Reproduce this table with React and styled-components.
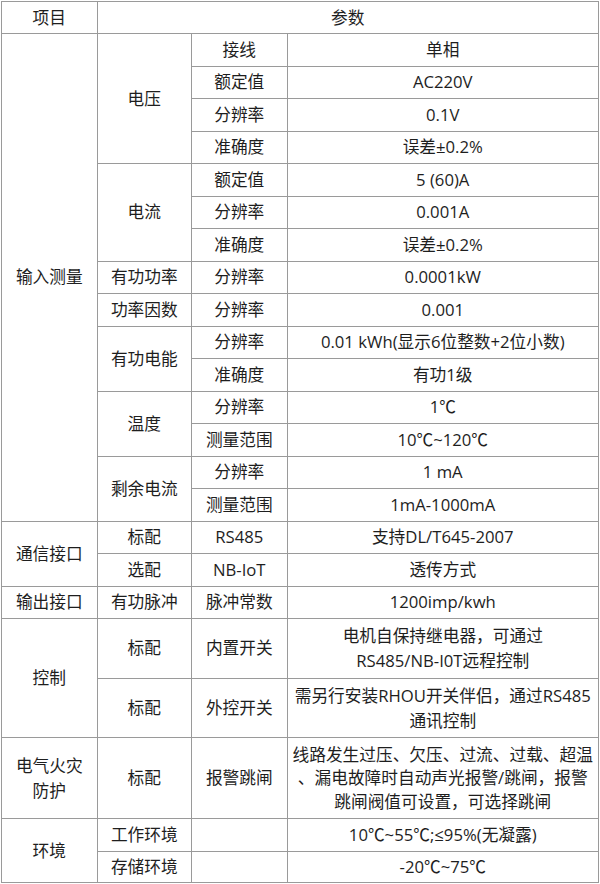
import React from "react";
import styled, { createGlobalStyle } from "styled-components";

const Global = createGlobalStyle`
  html, body { margin: 0; padding: 0; background: #fff; }
  body {
    font-family: "Open Sans", "Noto Sans CJK SC", sans-serif;
    color: #1e1e1e;
  }
`;

const Sheet = styled.table`
  margin: 1px 0 0 1px;
  width: 598px;
  border-collapse: collapse;
  table-layout: fixed;
  font-size: 16.7px;
`;

const Row = styled.tr`
  height: ${(p) => p.$h}px;
`;

const HeadCell = styled.th`
  border: 1px solid #9a9a9a;
  font-weight: 400;
  text-align: center;
  vertical-align: middle;
  padding: 0 2px;
  line-height: 24px;
`;

const Cell = styled.td`
  border: 1px solid #9a9a9a;
  text-align: center;
  vertical-align: middle;
  padding: 0 2px;
  line-height: ${(p) => p.$lh || 24}px;
  white-space: nowrap;
`;

const R = 32.5;

export default function App() {
  return (
    <>
      <Global />
      <Sheet>
        <colgroup>
          <col style={{ width: 95.5 }} />
          <col style={{ width: 94.5 }} />
          <col style={{ width: 95.5 }} />
          <col />
        </colgroup>
        <thead>
          <Row $h={32}>
            <HeadCell>项目</HeadCell>
            <HeadCell colSpan={3}>参数</HeadCell>
          </Row>
        </thead>
        <tbody>
          <Row $h={R}>
            <Cell rowSpan={15}>输入测量</Cell>
            <Cell rowSpan={4}>电压</Cell>
            <Cell>接线</Cell>
            <Cell>单相</Cell>
          </Row>
          <Row $h={R}>
            <Cell>额定值</Cell>
            <Cell>AC220V</Cell>
          </Row>
          <Row $h={R}>
            <Cell>分辨率</Cell>
            <Cell>0.1V</Cell>
          </Row>
          <Row $h={R}>
            <Cell>准确度</Cell>
            <Cell>误差±0.2%</Cell>
          </Row>
          <Row $h={R}>
            <Cell rowSpan={3}>电流</Cell>
            <Cell>额定值</Cell>
            <Cell>5 (60)A</Cell>
          </Row>
          <Row $h={R}>
            <Cell>分辨率</Cell>
            <Cell>0.001A</Cell>
          </Row>
          <Row $h={R}>
            <Cell>准确度</Cell>
            <Cell>误差±0.2%</Cell>
          </Row>
          <Row $h={R}>
            <Cell>有功功率</Cell>
            <Cell>分辨率</Cell>
            <Cell>0.0001kW</Cell>
          </Row>
          <Row $h={R}>
            <Cell>功率因数</Cell>
            <Cell>分辨率</Cell>
            <Cell>0.001</Cell>
          </Row>
          <Row $h={R}>
            <Cell rowSpan={2}>有功电能</Cell>
            <Cell>分辨率</Cell>
            <Cell>0.01 kWh(显示6位整数+2位小数)</Cell>
          </Row>
          <Row $h={R}>
            <Cell>准确度</Cell>
            <Cell>有功1级</Cell>
          </Row>
          <Row $h={R}>
            <Cell rowSpan={2}>温度</Cell>
            <Cell>分辨率</Cell>
            <Cell>1℃</Cell>
          </Row>
          <Row $h={R}>
            <Cell>测量范围</Cell>
            <Cell>10℃~120℃</Cell>
          </Row>
          <Row $h={R}>
            <Cell rowSpan={2}>剩余电流</Cell>
            <Cell>分辨率</Cell>
            <Cell>1 mA</Cell>
          </Row>
          <Row $h={R}>
            <Cell>测量范围</Cell>
            <Cell>1mA-1000mA</Cell>
          </Row>
          <Row $h={32}>
            <Cell rowSpan={2}>通信接口</Cell>
            <Cell>标配</Cell>
            <Cell>RS485</Cell>
            <Cell>支持DL/T645-2007</Cell>
          </Row>
          <Row $h={33}>
            <Cell>选配</Cell>
            <Cell>NB-IoT</Cell>
            <Cell>透传方式</Cell>
          </Row>
          <Row $h={R}>
            <Cell>输出接口</Cell>
            <Cell>有功脉冲</Cell>
            <Cell>脉冲常数</Cell>
            <Cell>1200imp/kwh</Cell>
          </Row>
          <Row $h={59.5}>
            <Cell rowSpan={2}>控制</Cell>
            <Cell>标配</Cell>
            <Cell>内置开关</Cell>
            <Cell $lh={25}>
              电机自保持继电器，可通过
              <br />
              RS485/NB-I0T远程控制
            </Cell>
          </Row>
          <Row $h={59}>
            <Cell>标配</Cell>
            <Cell>外控开关</Cell>
            <Cell $lh={25}>
              需另行安装RHOU开关伴侣，通过RS485
              <br />
              通讯控制
            </Cell>
          </Row>
          <Row $h={81.5}>
            <Cell $lh={25}>
              电气火灾
              <br />
              防护
            </Cell>
            <Cell>标配</Cell>
            <Cell>报警跳闸</Cell>
            <Cell $lh={23.5}>
              线路发生过压、欠压、过流、过载、超温
              <br />
              、漏电故障时自动声光报警/跳闸，报警
              <br />
              跳闸阀值可设置，可选择跳闸
            </Cell>
          </Row>
          <Row $h={33}>
            <Cell rowSpan={2}>环境</Cell>
            <Cell>工作环境</Cell>
            <Cell></Cell>
            <Cell>10℃~55℃;≤95%(无凝露)</Cell>
          </Row>
          <Row $h={31}>
            <Cell>存储环境</Cell>
            <Cell></Cell>
            <Cell>-20℃~75℃</Cell>
          </Row>
        </tbody>
      </Sheet>
    </>
  );
}
